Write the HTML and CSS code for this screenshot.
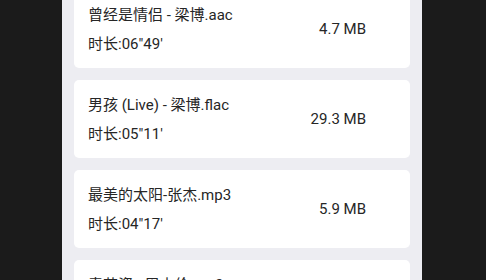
FILE: index.html
```html
<!DOCTYPE html>
<html>
<head>
<meta charset="utf-8">
<link rel="stylesheet" href="styles.css">
</head>
<body>
<div class="panel">
  <div class="card">
    <div class="info">
      <div class="name">曾经是情侣 - 梁博.aac</div>
      <div class="dur">时长:06"49'</div>
    </div>
    <div class="size">4.7 MB</div>
  </div>
  <div class="card">
    <div class="info">
      <div class="name">男孩 (Live) - 梁博.flac</div>
      <div class="dur">时长:05"11'</div>
    </div>
    <div class="size">29.3 MB</div>
  </div>
  <div class="card">
    <div class="info">
      <div class="name">最美的太阳-张杰.mp3</div>
      <div class="dur">时长:04"17'</div>
    </div>
    <div class="size">5.9 MB</div>
  </div>
  <div class="card">
    <div class="info">
      <div class="name">青花瓷 - 周杰伦.mp3</div>
      <div class="dur">时长:03"59'</div>
    </div>
    <div class="size">3.7 MB</div>
  </div>
</div>
</body>
</html>
```
FILE: styles.css
```css
html, body {
  margin: 0;
  padding: 0;
  height: 100%;
  overflow: hidden;
  background: #1b1b1b;
}
body {
  display: flex;
  justify-content: center;
  font-family: Roboto, "Noto Sans CJK SC", sans-serif;
  color: #262626;
}
.panel {
  width: 360px;
  margin-left: -2px;
  min-height: 100%;
  background: #ededf2;
  box-sizing: border-box;
  padding: 0 12px;
  display: flex;
  flex-direction: column;
  gap: 12px;
  margin-top: -10px;
}
.card {
  background: #ffffff;
  border-radius: 5px;
  height: 78px;
  box-sizing: border-box;
  padding: 11px 44px 9px 14px;
  display: flex;
  align-items: center;
  justify-content: space-between;
  flex-shrink: 0;
}
.info {
  display: flex;
  flex-direction: column;
}
.name, .dur {
  font-size: 15px;
  line-height: 29px;
  white-space: nowrap;
}
.size {
  font-size: 15px;
  line-height: 29px;
  white-space: nowrap;
  margin-bottom: 2px;
}
```
